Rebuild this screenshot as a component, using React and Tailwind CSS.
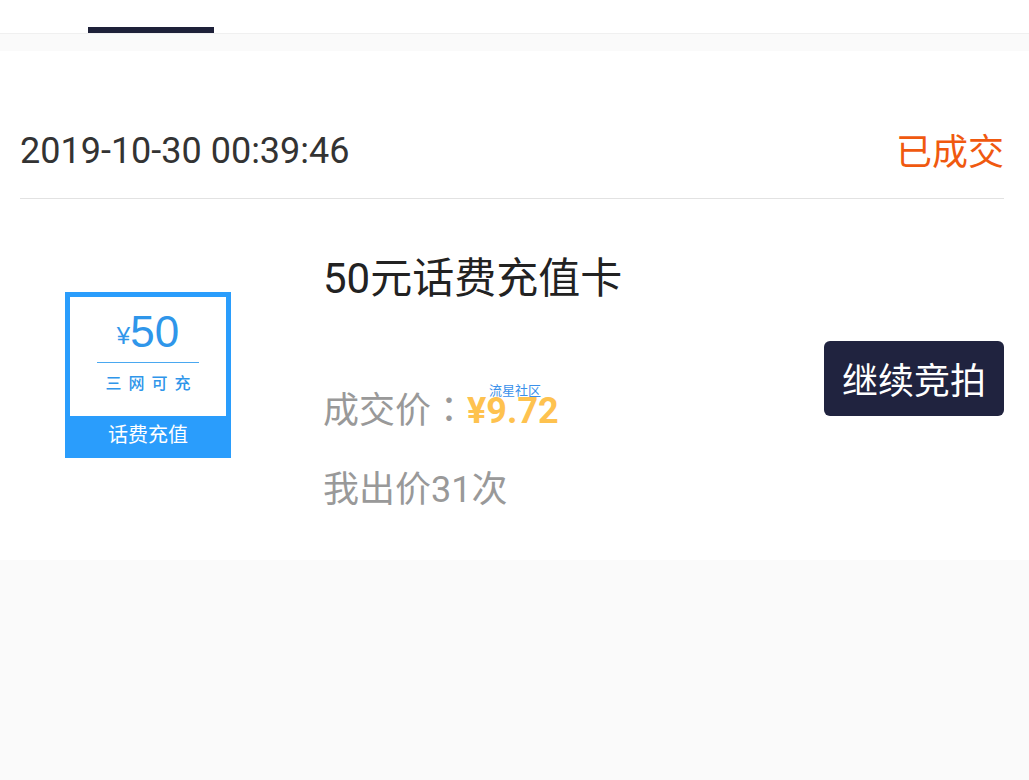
const orders = [
  {
    time: '2019-10-30 00:39:46',
    status: '已成交',
    title: '50元话费充值卡',
    price: '¥9.72',
    bids: '我出价31次',
  },
];

function CardPicture() {
  return (
    <div className="flex h-[166px] w-[166px] shrink-0 flex-col border-[5px] border-[#2a9dfc] bg-white text-[#2f96ea]">
      <div className="flex flex-1 flex-col items-center pt-3">
        <div className="flex items-center font-['Liberation_Sans','Noto_Sans_CJK_SC',sans-serif] text-[44px] leading-[46px]">
          <span className="pt-2 text-[24px] leading-6">¥</span>
          <span>50</span>
        </div>
        <div className="mt-[7px] h-px w-[102px] shrink-0 bg-[#4aa8f0]" />
        <div className="mt-[9px] flex gap-[7px] text-base leading-6 font-medium">
          {['三', '网', '可', '充'].map((c) => (
            <span key={c}>{c}</span>
          ))}
        </div>
      </div>
      <div className="bg-[#2a9dfc] pt-[2px] text-center text-[20px] leading-[35px] text-white">话费充值</div>
    </div>
  );
}

function Order({ order }) {
  return (
    <article className="bg-white pt-16 pr-[25px] pb-[43px] pl-5">
      <header className="flex items-center justify-between border-b border-[#e2e2e2] pt-[7px] pb-[18px] text-[36px] leading-[54px]">
        <time className="text-[#333333]">{order.time}</time>
        <span className="pt-1 text-[#f0590f]">{order.status}</span>
      </header>
      <div className="flex items-center pt-10">
        <div className="w-[303px] shrink-0 pb-[6px] pl-[45px]">
          <CardPicture />
        </div>
        <div className="min-w-0 flex-1 text-[36px] leading-[54px] text-[#999999]">
          <h2 className="text-[42px] leading-[80px] text-[#222222]">{order.title}</h2>
          <p className="relative mt-[65px]">
            成交价<span lang="zh-TW" className="font-['Noto_Sans_CJK_TC',sans-serif] leading-none">：</span>
            <strong className="font-bold text-[#fec24f]">{order.price}</strong>
            <span className="absolute -top-px left-[166px] text-[13px] leading-4 text-[#3a90ea]">流星社区</span>
          </p>
          <p className="mt-[25px]">{order.bids}</p>
        </div>
        <button type="button" className="h-[75px] w-[180px] shrink-0 rounded-md bg-[#20233f] pt-2 text-[36px] leading-[54px] text-white">
          继续竞拍
        </button>
      </div>
    </article>
  );
}

export default function App() {
  return (
    <div lang="zh-CN" className="min-h-screen bg-[#fafafa] font-[Roboto,'Noto_Sans_CJK_SC',sans-serif]">
      <div className="border-b border-[#f0f0f0] bg-white pt-[27px] pl-[88px]">
        <div className="h-[6px] w-[126px] bg-[#1e2139]" />
      </div>
      <main className="pt-[17px]">
        {orders.map((order) => (
          <Order key={order.time} order={order} />
        ))}
      </main>
    </div>
  );
}
